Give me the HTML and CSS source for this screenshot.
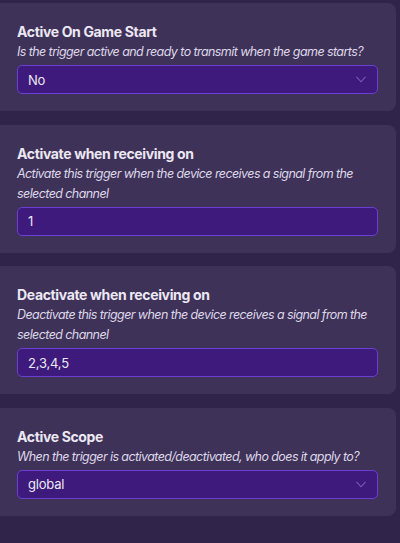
FILE: index.html
```html
<!DOCTYPE html>
<html>
<head>
<meta charset="utf-8">
<link rel="stylesheet" href="styles.css">
</head>
<body>
<div class="list">
  <section class="card">
    <div class="title">Active On Game Start</div>
    <div class="desc">Is the trigger active and ready to transmit when the game starts?</div>
    <div class="field select"><span>No</span><svg class="chev" width="10" height="7" viewBox="0 0 10 7"><path d="M0.5 0.8 L5 5.8 L9.5 0.8" fill="none" stroke="#7a5bb2" stroke-width="1.1"/></svg></div>
  </section>
  <section class="card">
    <div class="title">Activate when receiving on</div>
    <div class="desc">Activate this trigger when the device receives a signal from the selected channel</div>
    <div class="field"><span>1</span></div>
  </section>
  <section class="card">
    <div class="title">Deactivate when receiving on</div>
    <div class="desc">Deactivate this trigger when the device receives a signal from the selected channel</div>
    <div class="field"><span>2,3,4,5</span></div>
  </section>
  <section class="card">
    <div class="title">Active Scope</div>
    <div class="desc">When the trigger is activated/deactivated, who does it apply to?</div>
    <div class="field select"><span>global</span><svg class="chev" width="10" height="7" viewBox="0 0 10 7"><path d="M0.5 0.8 L5 5.8 L9.5 0.8" fill="none" stroke="#7a5bb2" stroke-width="1.1"/></svg></div>
  </section>
</div>
</body>
</html>
```

FILE: styles.css
```css
html, body {
  margin: 0;
  padding: 0;
  background: #30244a;
  height: 100%;
}
body {
  font-family: Inter, "Noto Sans", "Liberation Sans", sans-serif;
  color: #ece8f3;
  overflow: hidden;
}
.list {
  display: flex;
  flex-direction: column;
  gap: 13.5px;
  padding-top: 3px;
  margin-left: -10px;
  width: 406px;
}
.card {
  background: #3f3259;
  border-radius: 8px;
  padding: 19px 18px 17px 27px;
  display: flex;
  flex-direction: column;
}
.title {
  font-size: 14px;
  font-weight: 700;
  letter-spacing: -0.35px;
  line-height: 20px;
  color: #ece8f3;
}
.desc {
  font-size: 12.5px;
  font-style: italic;
  letter-spacing: -0.58px;
  line-height: 20px;
  color: #ddd7e8;
  margin-bottom: 3px;
}
.field {
  height: 27px;
  box-sizing: content-box;
  border: 1px solid #6a3fd2;
  background: #3d1a7c;
  border-radius: 5px;
  display: flex;
  align-items: center;
  justify-content: space-between;
  padding: 0 11px 0 10px;
  font-size: 13px;
  letter-spacing: -0.2px;
  color: #ece8f3;
}
.chev {
  display: block;
}
```
